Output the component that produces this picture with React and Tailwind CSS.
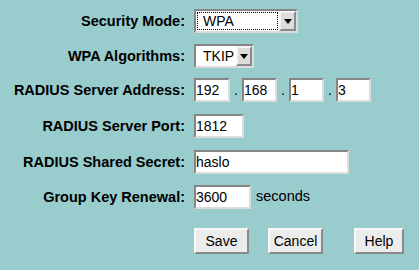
import React from "react";

const font = { fontFamily: '"Liberation Sans", Arial, sans-serif' };

function Label({ children }) {
  return (
    <div className="w-[186px] pr-[1px] text-right text-[14.5px] font-bold text-black leading-none">
      {children}
    </div>
  );
}

function Field({ value, width }) {
  return (
    <input
      readOnly
      defaultValue={value}
      className={`${width} h-[24px] bg-white border-2 border-solid border-t-[#858585] border-l-[#858585] border-b-[#dcdcdc] border-r-[#dcdcdc] px-0 text-[14px] text-black outline-none`}
      style={font}
    />
  );
}

function Dot() {
  return <span className="w-[12px] text-center text-[14px] leading-none self-end mb-[5px]">.</span>;
}

function Select({ value, width, focused }) {
  return (
    <div
      className={`${width} h-[24px] flex bg-white border-2 border-solid border-t-[#858585] border-l-[#858585] border-b-[#dcdcdc] border-r-[#dcdcdc]`}
    >
      <div className="flex-1 p-[1px]">
        <div
          className={`h-full flex items-center pl-[5px] text-[14px] text-black ${
            focused ? "border border-dotted border-black" : "border border-transparent"
          }`}
        >
          {value}
        </div>
      </div>
      <div className="w-[17px] h-full bg-[#dcdcdc] border-2 border-solid border-t-[#f4f4f4] border-l-[#f4f4f4] border-b-[#8a8a8a] border-r-[#8a8a8a] flex items-center justify-center">
        <svg width="8" height="5" viewBox="0 0 8 5">
          <path d="M0 0h8L4 5z" fill="#000" />
        </svg>
      </div>
    </div>
  );
}

function Button({ children, width }) {
  return (
    <button
      className={`${width} h-[26px] bg-[#ececec] border-2 border-solid border-t-[#f8f8f8] border-l-[#f8f8f8] border-b-[#8a8a8a] border-r-[#8a8a8a] text-[14px] text-black`}
      style={font}
    >
      {children}
    </button>
  );
}

export default function App() {
  return (
    <div className="w-[419px] h-[270px] bg-[#99cccc] pt-[9px] overflow-hidden" style={font}>
      <div className="flex items-center h-[24px]">
        <Label>Security Mode:</Label>
        <div className="ml-[8px]">
          <Select value="WPA" width="w-[104px]" focused />
        </div>
      </div>

      <div className="flex items-center h-[24px] mt-[11px]">
        <Label>WPA Algorithms:</Label>
        <div className="ml-[8px]">
          <Select value="TKIP" width="w-[60px]" />
        </div>
      </div>

      <div className="flex items-center h-[24px] mt-[10px]">
        <Label>RADIUS Server Address:</Label>
        <div className="ml-[8px] flex h-[24px]">
          <Field value="192" width="w-[36px]" />
          <Dot />
          <Field value="168" width="w-[35px]" />
          <Dot />
          <Field value="1" width="w-[35px]" />
          <Dot />
          <Field value="3" width="w-[35px]" />
        </div>
      </div>

      <div className="flex items-center h-[24px] mt-[12px]">
        <Label>RADIUS Server Port:</Label>
        <div className="ml-[8px]">
          <Field value="1812" width="w-[50px]" />
        </div>
      </div>

      <div className="flex items-center h-[24px] mt-[12px]">
        <Label>RADIUS Shared Secret:</Label>
        <div className="ml-[8px]">
          <Field value="haslo" width="w-[155px]" />
        </div>
      </div>

      <div className="flex items-center h-[24px] mt-[11px]">
        <Label>Group Key Renewal:</Label>
        <div className="ml-[8px] flex items-center">
          <Field value="3600" width="w-[57px]" />
          <span className="ml-[5px] text-[14.5px] text-black">seconds</span>
        </div>
      </div>

      <div className="flex items-center mt-[19px] pl-[194px]">
        <Button width="w-[55px]">Save</Button>
        <div className="ml-[19px]">
          <Button width="w-[55px]">Cancel</Button>
        </div>
        <div className="ml-[31px]">
          <Button width="w-[50px]">Help</Button>
        </div>
      </div>
    </div>
  );
}
